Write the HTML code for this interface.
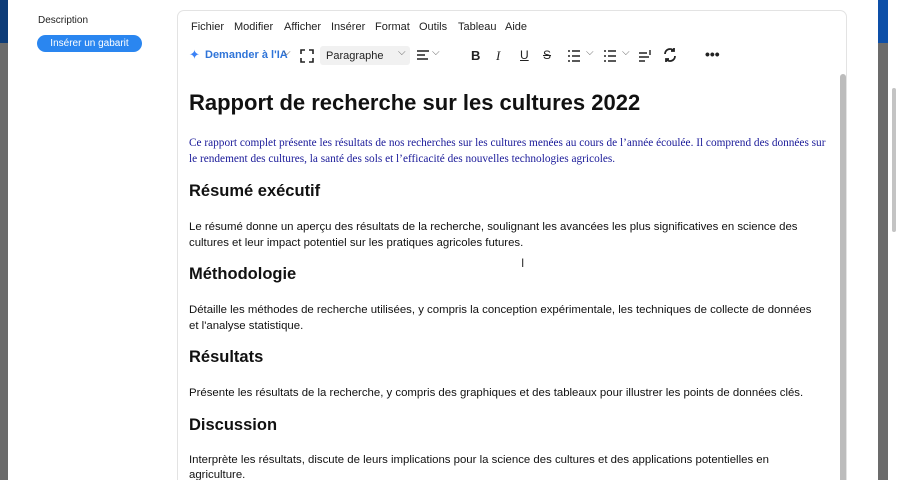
<!DOCTYPE html>
<html><head><meta charset="utf-8"><style>
html,body{margin:0;width:899px;height:480px;overflow:hidden}
body{background:#fff;font-family:"Liberation Sans",sans-serif;position:relative}
.a{position:absolute;white-space:nowrap}
.m{font-size:11px;color:#222;top:21px}
.p{font-size:11.4px;color:#111;left:189px;line-height:16px}
.h{font-weight:bold;font-size:16.5px;color:#111;left:189px}
.tb{position:absolute;top:48px;color:#222}
</style></head><body>
<div class="a" style="left:0;top:0;width:8px;height:43px;background:#0d3c78"></div>
<div class="a" style="left:0;top:43px;width:8px;height:437px;background:#6b6b6b"></div>
<div class="a" style="left:878px;top:0;width:10px;height:43px;background:#0d4fa8"></div>
<div class="a" style="left:878px;top:43px;width:10px;height:437px;background:#6b6b6b"></div>
<div class="a" style="left:892px;top:88px;width:4px;height:144px;background:#c4c4c4;border-radius:2px"></div>

<div class="a" style="left:38px;top:15px;font-size:10px;color:#222">Description</div>
<div class="a" style="left:37px;top:35px;width:105px;height:17px;background:#2a86f0;border-radius:9px;color:#fff;font-size:10px;line-height:17px;text-align:center">Insérer un gabarit</div>

<div class="a" style="left:177px;top:10px;width:670px;height:470px;border:1px solid #e3e3e3;border-bottom:none;border-radius:7px 7px 0 0;box-sizing:border-box"></div>
<div class="a" style="left:840px;top:74px;width:6px;height:406px;background:#bcbcbc;border-radius:3px 3px 0 0"></div>

<div class="a m" style="left:191px">Fichier</div>
<div class="a m" style="left:234px">Modifier</div>
<div class="a m" style="left:284px">Afficher</div>
<div class="a m" style="left:331px">Insérer</div>
<div class="a m" style="left:375px">Format</div>
<div class="a m" style="left:419px">Outils</div>
<div class="a m" style="left:458px">Tableau</div>
<div class="a m" style="left:505px">Aide</div>

<div class="a" style="left:189px;top:47px;color:#3b82f6;font-size:13px">✦</div>
<div class="a" style="left:205px;top:49px;color:#2f74d8;font-size:11px;font-weight:bold">Demander à l'IA</div>
<div class="a" style="left:283px;top:47px;color:#555;font-size:10px">⌵</div>
<svg class="a" style="left:300px;top:49px" width="14" height="14" viewBox="0 0 14 14" fill="none" stroke="#222" stroke-width="1.6"><path d="M1 5V1h4M9 1h4v4M13 9v4H9M5 13H1V9"/></svg>
<div class="a" style="left:320px;top:46px;width:90px;height:19px;background:#f1f1f1;border-radius:3px"></div>
<div class="a" style="left:326px;top:50px;font-size:11px;color:#222">Paragraphe</div>
<div class="a" style="left:398px;top:47px;color:#666;font-size:10px">⌵</div>
<svg class="a" style="left:417px;top:50px" width="12" height="11" stroke="#222" stroke-width="1.5"><path d="M0 1h12M0 5h8M0 9h11"/></svg>
<div class="a" style="left:432px;top:47px;color:#666;font-size:10px">⌵</div>
<div class="tb" style="left:471px;font-size:13px;font-weight:bold">B</div>
<div class="tb" style="left:496px;font-size:13px;font-family:'Liberation Serif',serif;font-style:italic">I</div>
<div class="tb" style="left:520px;font-size:12px;text-decoration:underline">U</div>
<div class="tb" style="left:543px;font-size:12px;text-decoration:line-through">S</div>
<svg class="a" style="left:568px;top:50px" width="12" height="12" stroke="#222" stroke-width="1.4"><path d="M4 1h8M4 6h8M4 11h8M0 1h2M0 6h2M0 11h2"/></svg>
<div class="a" style="left:586px;top:47px;color:#666;font-size:10px">⌵</div>
<svg class="a" style="left:604px;top:50px" width="12" height="12" stroke="#222" stroke-width="1.4"><path d="M4 1h8M4 6h8M4 11h8M0 1h2M0 6h2M0 11h2"/></svg>
<div class="a" style="left:622px;top:47px;color:#666;font-size:10px">⌵</div>
<svg class="a" style="left:639px;top:49px" width="13" height="13" stroke="#222" stroke-width="1.4"><path d="M0 4h8M0 8h10M0 12h6M11 1v5"/></svg>
<svg class="a" style="left:662px;top:47px" width="16" height="16" fill="none" stroke="#222" stroke-width="1.8"><path d="M3 7a5 5 0 0 1 9-3M13 9a5 5 0 0 1-9 3M12 1v3h-3M4 15v-3h3"/></svg>
<div class="a" style="left:705px;top:46px;font-size:14px;font-weight:bold;color:#222">•••</div>

<div class="a" style="left:189px;top:90px;font-size:22px;font-weight:bold;color:#111">Rapport de recherche sur les cultures 2022</div>
<div class="a" style="left:189px;top:135px;font-family:'Liberation Serif',serif;font-size:11.3px;line-height:16px;color:#1a1a99">Ce rapport complet présente les résultats de nos recherches sur les cultures menées au cours de l’année écoulée. Il comprend des données sur<br>le rendement des cultures, la santé des sols et l’efficacité des nouvelles technologies agricoles.</div>
<div class="a h" style="top:182px">Résumé exécutif</div>
<div class="a p" style="top:219px">Le résumé donne un aperçu des résultats de la recherche, soulignant les avancées les plus significatives en science des<br>cultures et leur impact potentiel sur les pratiques agricoles futures.</div>
<div class="a h" style="top:265px">Méthodologie</div>
<div class="a p" style="top:302px">Détaille les méthodes de recherche utilisées, y compris la conception expérimentale, les techniques de collecte de données<br>et l'analyse statistique.</div>
<div class="a h" style="top:348px">Résultats</div>
<div class="a p" style="top:385px">Présente les résultats de la recherche, y compris des graphiques et des tableaux pour illustrer les points de données clés.</div>
<div class="a h" style="top:416px">Discussion</div>
<div class="a p" style="top:453px;line-height:15px">Interprète les résultats, discute de leurs implications pour la science des cultures et des applications potentielles en<br>agriculture.</div>
<div class="a" style="left:521px;top:256px;font-size:12px;color:#333">I</div>
</body></html>
